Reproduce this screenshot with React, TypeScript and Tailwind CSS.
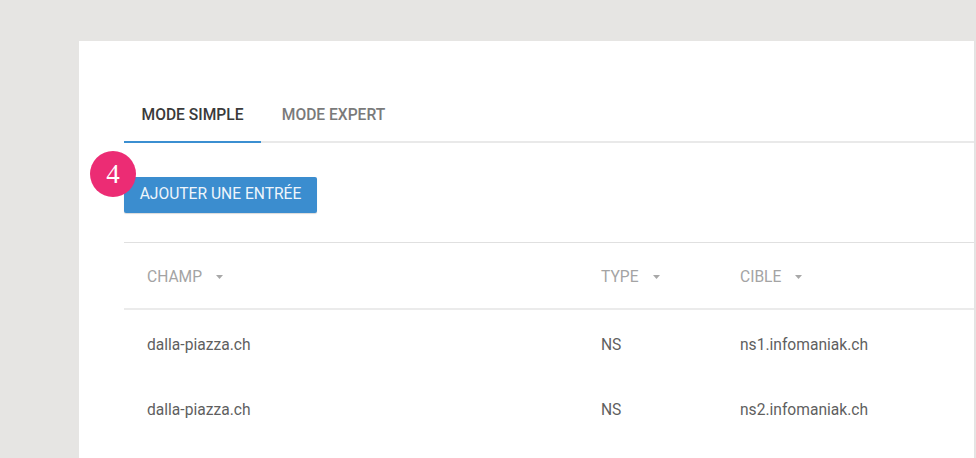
import React from "react";

const rows = [
  { champ: "dalla-piazza.ch", type: "NS", cible: "ns1.infomaniak.ch" },
  { champ: "dalla-piazza.ch", type: "NS", cible: "ns2.infomaniak.ch" },
];

function SortArrow() {
  return (
    <svg width="7" height="4" viewBox="0 0 7 4" className="ml-[14px] mt-[-2px]">
      <path d="M0 0h7L3.5 4z" fill="#a8a8a8" />
    </svg>
  );
}

export default function App() {
  return (
    <div
      className="w-[976px] h-[458px] overflow-hidden bg-[#e6e5e3] pt-[41px] pl-[79px] pr-[1px]"
      style={{ fontFamily: "Roboto, 'Liberation Sans', sans-serif" }}
    >
      <div className="h-full bg-white border-r border-[#e3e3e3] pl-[45px] pt-[58px]">
        {/* tabs */}
        <div className="flex border-b-2 border-[#e9e9e9]">
          <div className="w-[137px] h-[44px] mb-[-2px] border-b-2 border-[#3b8fd1] text-center text-[15.6px] font-medium text-[#3a3a3a] leading-[16px] pt-[8px]">
            MODE SIMPLE
          </div>
          <div className="w-[145px] h-[42px] text-center text-[15.6px] font-medium text-[#7a7a7a] leading-[16px] pt-[8px]">
            MODE EXPERT
          </div>
        </div>

        {/* button with step badge */}
        <div className="relative mt-[34px] w-[193px]">
          <button className="w-[193px] h-[36px] bg-[#3b8dcf] text-[#eef5fb] text-[15.6px] rounded-[2px] shadow-[0_1px_1px_rgba(0,0,0,0.15)]">
            AJOUTER UNE ENTRÉE
          </button>
          <div
            className="absolute left-[-34px] top-[-26px] w-[46px] h-[46px] rounded-full bg-[#ec2c74] text-white flex items-center justify-center text-[27px]"
            style={{ fontFamily: "'Liberation Serif', 'DejaVu Serif', serif" }}
          >
            4
          </div>
        </div>

        {/* table */}
        <div className="mt-[29px] border-t border-[#e0e0e0]">
          <div className="flex items-center h-[67px] pt-[5px] border-b-2 border-[#ebebeb] text-[15.6px] text-[#a4a4a4]">
            <div className="w-[477px] shrink-0 pl-[23px] flex items-center">
              CHAMP
              <SortArrow />
            </div>
            <div className="w-[139px] shrink-0 flex items-center">
              TYPE
              <SortArrow />
            </div>
            <div className="flex items-center">
              CIBLE
              <SortArrow />
            </div>
          </div>
          {rows.map((r, i) => (
            <div key={i} className="flex items-center h-[65px] pt-[6px] text-[15.6px] text-[#5f5f5f]">
              <div className="w-[477px] shrink-0 pl-[23px]">{r.champ}</div>
              <div className="w-[139px] shrink-0">{r.type}</div>
              <div>{r.cible}</div>
            </div>
          ))}
        </div>
      </div>
    </div>
  );
}
